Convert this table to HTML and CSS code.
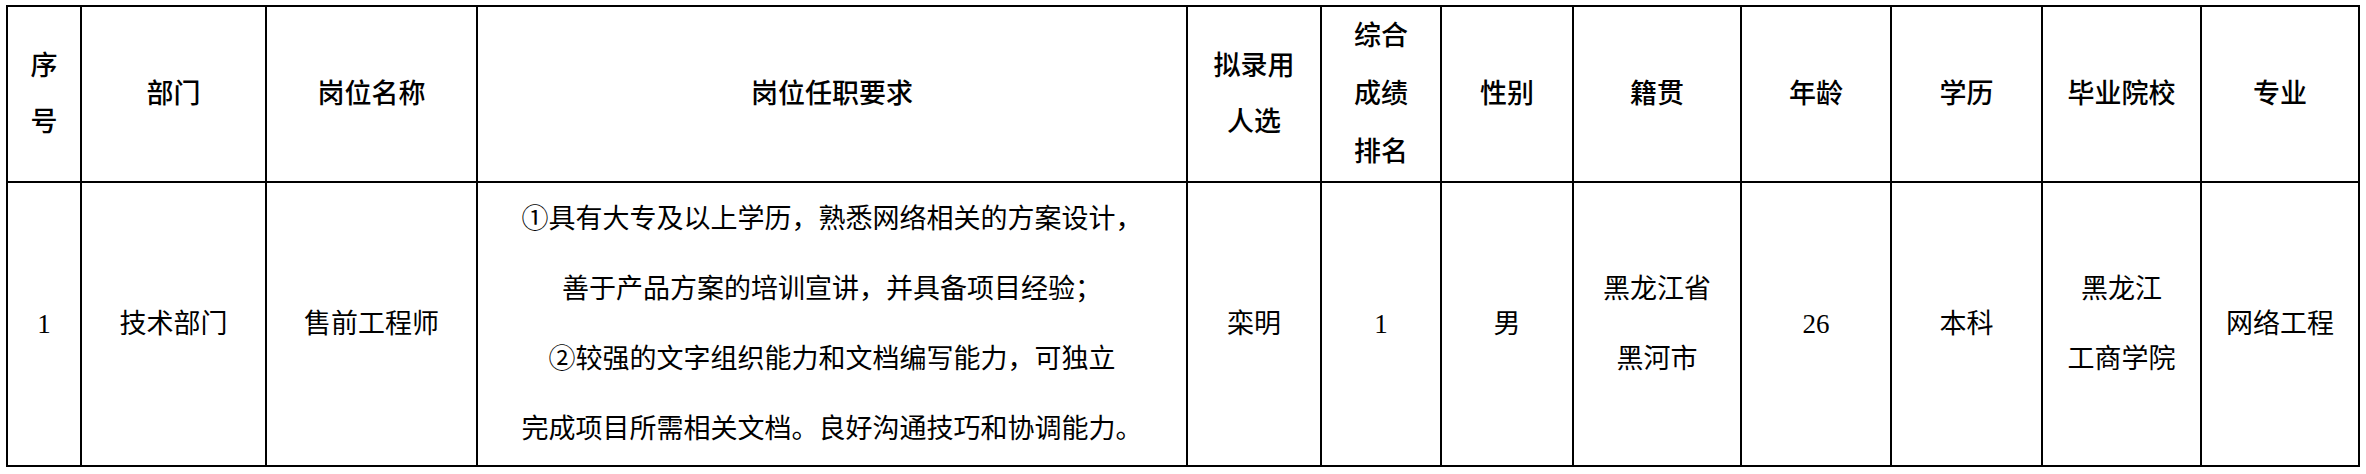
FILE: index.html
```html
<!DOCTYPE html>
<html lang="zh-CN">
<head>
<meta charset="utf-8">
<title>拟录用人选公示</title>
<link rel="stylesheet" href="styles.css">
</head>
<body>
<table class="grid">
  <colgroup>
    <col class="c-no">
    <col class="c-dept">
    <col class="c-post">
    <col class="c-req">
    <col class="c-name">
    <col class="c-rank">
    <col class="c-sex">
    <col class="c-home">
    <col class="c-age">
    <col class="c-edu">
    <col class="c-school">
    <col class="c-major">
  </colgroup>
  <thead>
    <tr class="head">
      <th>序<br>号</th>
      <th>部门</th>
      <th>岗位名称</th>
      <th>岗位任职要求</th>
      <th>拟录用<br>人选</th>
      <th class="tight">综合<br>成绩<br>排名</th>
      <th>性别</th>
      <th>籍贯</th>
      <th>年龄</th>
      <th>学历</th>
      <th>毕业院校</th>
      <th>专业</th>
    </tr>
  </thead>
  <tbody>
    <tr class="body">
      <td>1</td>
      <td>技术部门</td>
      <td>售前工程师</td>
      <td class="req">
        <span class="line">①具有大专及以上学历，熟悉网络相关的方案设计，</span>
        <span class="line">善于产品方案的培训宣讲，并具备项目经验；</span>
        <span class="line">②较强的文字组织能力和文档编写能力，可独立</span>
        <span class="line">完成项目所需相关文档。良好沟通技巧和协调能力。</span>
      </td>
      <td>栾明</td>
      <td>1</td>
      <td>男</td>
      <td>黑龙江省<br>黑河市</td>
      <td>26</td>
      <td>本科</td>
      <td>黑龙江<br>工商学院</td>
      <td>网络工程</td>
    </tr>
  </tbody>
</table>
</body>
</html>
```

FILE: styles.css
```css
html, body {
  margin: 0;
  padding: 0;
  background: #ffffff;
}

body {
  padding: 5px 0 0 6px;
  font-family: "Liberation Serif", "Noto Sans CJK SC", serif;
  color: #000000;
}

.grid {
  border-collapse: collapse;
  table-layout: fixed;
  width: 2354px;
}

.grid th,
.grid td {
  border: 2px solid #000000;
  padding: 0;
  text-align: center;
  vertical-align: middle;
  font-size: 27px;
  white-space: nowrap;
}

.grid th {
  font-weight: 500;
  line-height: 56px;
}

.grid th.tight {
  line-height: 58px;
}

.grid td {
  font-weight: 400;
  line-height: 70px;
}

.head { height: 175px; }
.body { height: 284px; }

.req .line { display: block; }

.c-no { width: 74px; }
.c-dept { width: 185px; }
.c-post { width: 211px; }
.c-req { width: 710px; }
.c-name { width: 134px; }
.c-rank { width: 120px; }
.c-sex { width: 132px; }
.c-home { width: 168px; }
.c-age { width: 150px; }
.c-edu { width: 151px; }
.c-school { width: 159px; }
.c-major { width: 158px; }
```
